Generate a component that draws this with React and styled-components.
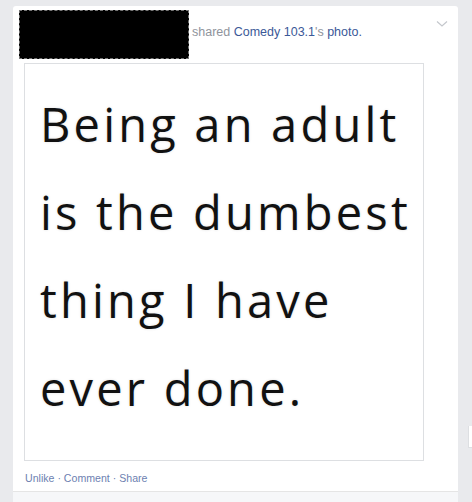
import React from "react";
import styled, { createGlobalStyle } from "styled-components";

const Global = createGlobalStyle`
  html, body { margin: 0; padding: 0; background: #e9eaed; }
  body { font-family: Helvetica, Arial, "Liberation Sans", sans-serif; }
`;

const Page = styled.div`
  display: flex;
  align-items: flex-start;
  gap: 10px;
  padding: 6px 0 0 13px;
  height: 496px;
  overflow: hidden;
`;

const Card = styled.div`
  width: 445px;
  flex: none;
  background: #fff;
  border-radius: 3px 3px 0 0;
  display: flex;
  flex-direction: column;
  height: 500px;
`;

const Side = styled.div`
  flex: 1;
  margin-top: 420px;
  height: 21px;
  background: #fff;
  border-left: 1px solid #dddfe2;
  border-bottom: 1px solid #dddfe2;
`;

const Header = styled.div`
  display: flex;
  align-items: flex-start;
  padding: 4px 0 0 6px;
  position: relative;
`;

const Redacted = styled.div`
  width: 168px;
  height: 47px;
  background: #000;
  border: 1px dashed #777;
  flex: none;
`;

const Title = styled.div`
  font-size: 12.5px;
  line-height: 16px;
  padding: 14px 0 0 3px;
  color: #90949c;
`;

const Link = styled.span`
  color: #3b5998;
`;

const Chevron = styled.svg`
  position: absolute;
  right: 10px;
  top: 14px;
`;

const Photo = styled.div`
  margin: 4px 0 0 11px;
  width: 398px;
  height: 396px;
  border: 1px solid #dddfe2;
  background: #fff;
  box-sizing: content-box;
`;

const Quote = styled.div`
  font-family: "Open Sans", Lato, sans-serif;
  font-size: 47px;
  line-height: 88px;
  letter-spacing: 3.2px;
  color: #111;
  padding: 16px 0 0 15px;
  white-space: nowrap;
  text-shadow: 0 0 3px rgba(0,0,0,0.12);
`;

const Actions = styled.div`
  font-size: 10.6px;
  line-height: 16px;
  color: #6d7fb1;
  padding: 9px 0 0 12px;
  height: 21px;
`;

const Footer = styled.div`
  flex: 1;
  background: #f6f7f9;
  border-top: 1px solid #e5e5e5;
`;

export default function App() {
  return (
    <>
      <Global />
      <Page>
        <Card>
          <Header>
            <Redacted />
            <Title>
              shared <Link>Comedy 103.1</Link>'s <Link>photo.</Link>
            </Title>
            <Chevron width="12" height="8" viewBox="0 0 12 8">
              <path d="M1 1.5 L6 6 L11 1.5" fill="none" stroke="#c4c7cc" strokeWidth="1.2" />
            </Chevron>
          </Header>
          <Photo>
            <Quote>
              Being an adult<br />
              is the dumbest<br />
              thing I have<br />
              ever done.
            </Quote>
          </Photo>
          <Actions>Unlike · Comment · Share</Actions>
          <Footer />
        </Card>
        <Side />
      </Page>
    </>
  );
}
